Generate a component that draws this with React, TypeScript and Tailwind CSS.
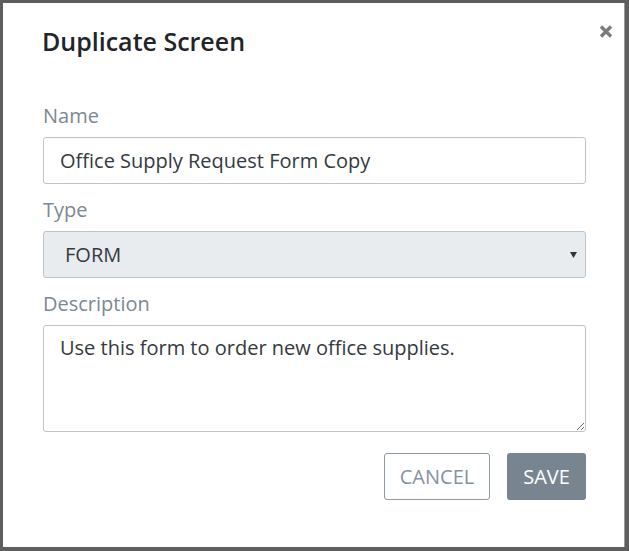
import React from 'react';

const font = { fontFamily: '"Open Sans", "Noto Sans", sans-serif' };

const CloseIcon = () => (
  <svg width="14" height="13" viewBox="0 0 14 13" aria-hidden>
    <path d="M2 1.5 L12 11.5 M12 1.5 L2 11.5" stroke="#7b7b7b" strokeWidth="3.4" strokeLinecap="butt" />
  </svg>
);

const Label = ({ children }: { children: React.ReactNode }) => (
  <label className="block h-[28px] text-[20px] leading-[28px] text-[#7d8892] mb-[7px]">{children}</label>
);

export default function App() {
  return (
    <div className="w-[629px] h-[551px] bg-[#5e5e5e] pl-[3px] pt-[3px] pr-[4px] pb-[4px]" style={font}>
      <div className="relative w-full h-full bg-white border-r border-[#9a9a9a] pl-[40px] pr-[38px] pt-[20px]">
        <button className="absolute right-[11px] top-[22px] p-0 leading-none">
          <CloseIcon />
        </button>

        <h2 className="text-[25px] leading-[36px] font-semibold text-[#212529] -ml-px mb-[43px]">Duplicate Screen</h2>

        <Label>Name</Label>
        <input
          className="block w-full h-[47px] border border-[#bcc3ca] rounded-[3px] px-[16px] text-[20px] text-[#343a40] outline-none mb-[12px]"
          defaultValue="Office Supply Request Form Copy"
        />

        <Label>Type</Label>
        <div className="relative flex items-center w-full h-[47px] border border-[#bcc3ca] rounded-[3px] bg-[#e9ecef] pl-[21px] text-[20px] text-[#343a40] mb-[12px]">
          FORM
          <svg className="absolute right-[8px] top-[20px]" width="7" height="6" viewBox="0 0 7 6" aria-hidden>
            <path d="M0 0 H7 L3.5 6 Z" fill="#333" />
          </svg>
        </div>

        <Label>Description</Label>
        <textarea
          className="block w-full h-[107px] border border-[#bcc3ca] rounded-[3px] px-[16px] pt-[8px] text-[20px] leading-[28px] text-[#343a40] outline-none"
          defaultValue="Use this form to order new office supplies."
        />

        <div className="flex justify-end gap-[17px] mt-[21px]">
          <button className="h-[47px] w-[106px] border border-[#8d99a5] rounded-[3px] bg-white text-[20px] text-[#8592a0]">
            CANCEL
          </button>
          <button className="h-[47px] w-[79px] rounded-[3px] bg-[#788591] text-[20px] text-white">
            SAVE
          </button>
        </div>
      </div>
    </div>
  );
}
